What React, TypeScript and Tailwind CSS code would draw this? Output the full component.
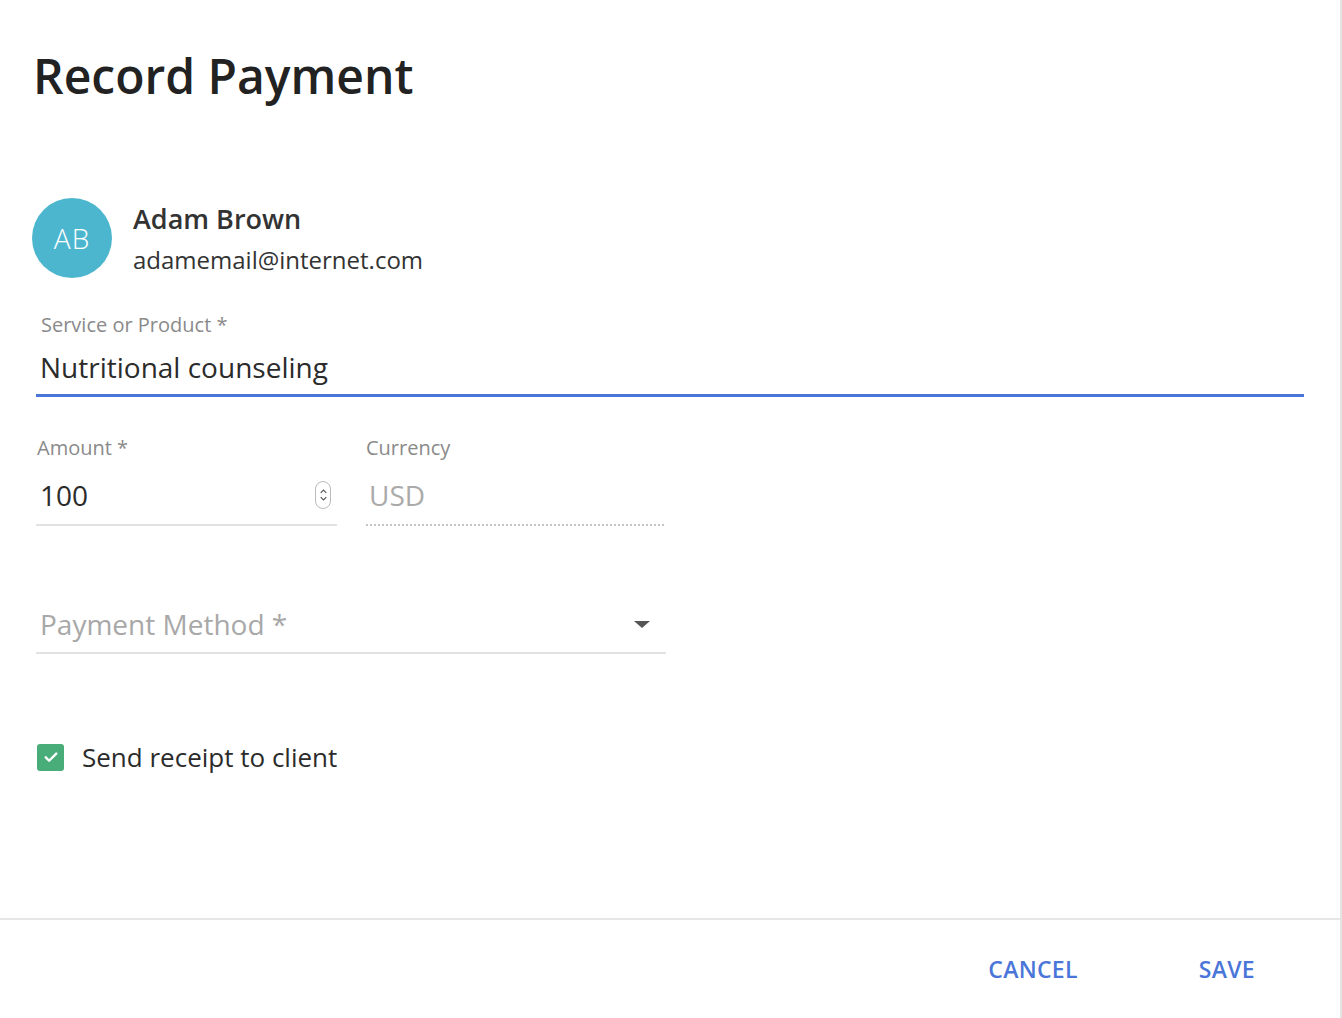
const CheckIcon = () => (
  <svg viewBox="0 0 24 24" className="w-[18px] h-[18px]" fill="none" stroke="white" strokeWidth="3.2" strokeLinecap="round" strokeLinejoin="round">
    <path d="M5 12.5l4.5 4.5L19 7.5" />
  </svg>
);

const Spinner = () => (
  <div className="w-[16px] h-[28px] rounded-full border border-[#bbb] flex flex-col items-center justify-center gap-[2px]">
    <svg viewBox="0 0 10 6" className="w-[7px] h-[5px]" fill="none" stroke="#555" strokeWidth="1.6">
      <path d="M1 5l4-4 4 4" />
    </svg>
    <svg viewBox="0 0 10 6" className="w-[7px] h-[5px]" fill="none" stroke="#555" strokeWidth="1.6">
      <path d="M1 1l4 4 4-4" />
    </svg>
  </div>
);

const App = () => {
  return (
    <div className="w-[1342px] h-[1018px] bg-white flex flex-col border-r-2 border-[#e4e4e4] font-['Open_Sans',sans-serif] text-[#2b2b2b]">
      <div className="flex-1 flex flex-col pl-[36px]">
        <h1 className="text-[48px] font-semibold leading-none mt-[52px] ml-[-3px] text-[#222]">
          Record Payment
        </h1>

        <div className="flex items-center gap-[21px] mt-[98px] ml-[-4px]">
          <div className="w-[80px] h-[80px] rounded-full bg-[#4db6cf] flex items-center justify-center text-white text-[28px] font-light tracking-[1px]">
            AB
          </div>
          <div className="flex flex-col gap-[9px] mt-[1px]">
            <span className="text-[27px] font-semibold leading-[34px] text-[#333]">Adam Brown</span>
            <span className="text-[24px] leading-[30px] text-[#333]">adamemail@internet.com</span>
          </div>
        </div>

        <div className="flex flex-col w-[1268px] mt-[34px]">
          <label className="text-[20px] text-[#8a8a8a] ml-[5px] leading-[26px]">Service or Product *</label>
          <div className="text-[28px] leading-[36px] ml-[4px] mt-[11px] text-[#2b2b2b]">Nutritional counseling</div>
          <div className="h-[3px] bg-[#4a76d9] mt-[9px]" />
        </div>

        <div className="flex gap-[29px] mt-[38px]">
          <div className="flex flex-col w-[301px]">
            <label className="text-[20px] text-[#8a8a8a] ml-[1px] leading-[26px]">Amount *</label>
            <div className="flex items-center justify-between mt-[16px] pr-[6px]">
              <span className="text-[28px] leading-[36px] ml-[4px]">100</span>
              <Spinner />
            </div>
            <div className="h-[2px] bg-[#e2e2e2] mt-[11px]" />
          </div>
          <div className="flex flex-col w-[298px]">
            <label className="text-[20px] text-[#8a8a8a] leading-[26px]">Currency</label>
            <span className="text-[28px] leading-[36px] ml-[3px] mt-[16px] text-[#aaa]">USD</span>
            <div className="h-[2px] mt-[11px] border-b-2 border-dotted border-[#c4c4c4]" />
          </div>
        </div>

        <div className="flex flex-col w-[630px] mt-[80px]">
          <div className="flex items-center justify-between pr-[16px]">
            <span className="text-[28px] leading-[36px] ml-[4px] text-[#a8a8a8]">Payment Method *</span>
            <span className="w-0 h-0 border-l-[8px] border-r-[8px] border-t-[7px] border-l-transparent border-r-transparent border-t-[#555]" />
          </div>
          <div className="h-[2px] bg-[#e2e2e2] mt-[10px]" />
        </div>

        <div className="flex items-center gap-[18px] mt-[86px] ml-[1px]">
          <div className="w-[27px] h-[27px] rounded-[3px] bg-[#48ad78] flex items-center justify-center">
            <CheckIcon />
          </div>
          <span className="text-[26px] leading-[34px] text-[#2b2b2b]">Send receipt to client</span>
        </div>
      </div>

      <div className="h-[100px] border-t-2 border-[#e6e6e6] flex items-center justify-end pr-[85px] gap-[121px]">
        <button className="text-[23px] font-semibold text-[#4a76d9] tracking-[0.3px]">CANCEL</button>
        <button className="text-[23px] font-semibold text-[#4a76d9] tracking-[0.3px]">SAVE</button>
      </div>
    </div>
  );
};

export default App;
